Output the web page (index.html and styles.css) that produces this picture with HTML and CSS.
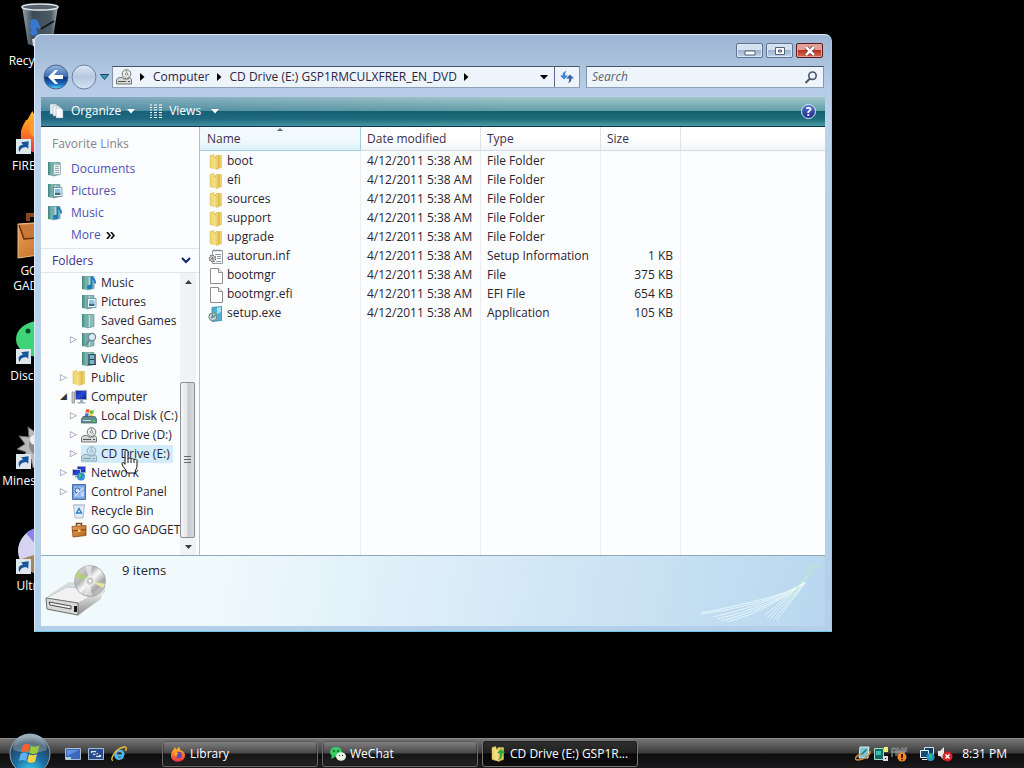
FILE: index.html
```html
<!DOCTYPE html>
<html lang="en">
<head>
    <meta charset="UTF-8">
    <meta name="viewport" content="width=device-width, initial-scale=1.0">
    <title>CD Drive (E:) GSP1RMCULXFRER_EN_DVD</title>
    <link rel="stylesheet" href="styles.css">
</head>
<body>
    <svg class="sprites" aria-hidden="true">
        <defs>
            <linearGradient id="gold" x1="0" x2="1"><stop offset="0" stop-color="#f7e88f"/><stop offset=".5" stop-color="#dcb93c"/><stop offset="1" stop-color="#f4e08a"/></linearGradient>
            <linearGradient id="teal" x1="0" x2="1"><stop offset="0" stop-color="#3f8583"/><stop offset="1" stop-color="#8fc4bd"/></linearGradient>
            <linearGradient id="metal" x1="0" y1="0" x2="0" y2="1"><stop offset="0" stop-color="#f4f4f4"/><stop offset="1" stop-color="#8d8d8d"/></linearGradient>
            <linearGradient id="disc" x1="0" y1="0" x2="1" y2="1"><stop offset="0" stop-color="#e8e8e8"/><stop offset=".35" stop-color="#b4b4b4"/><stop offset=".5" stop-color="#fafafa"/><stop offset=".7" stop-color="#a8a8a8"/><stop offset="1" stop-color="#dedede"/></linearGradient>
            <linearGradient id="screen" x1="0" y1="0" x2="1" y2="1"><stop offset="0" stop-color="#0d1da0"/><stop offset=".5" stop-color="#2a49dc"/><stop offset="1" stop-color="#0b1a86"/></linearGradient>
            <linearGradient id="leather" x1="0" y1="0" x2="1" y2="1"><stop offset="0" stop-color="#eda05a"/><stop offset="1" stop-color="#b4641f"/></linearGradient>
            <linearGradient id="flame" x1="0" y1="0" x2="0" y2="1"><stop offset="0" stop-color="#ffc62b"/><stop offset=".5" stop-color="#ff7a22"/><stop offset="1" stop-color="#f0304a"/></linearGradient>
            <linearGradient id="glass" x1="0" x2="1"><stop offset="0" stop-color="#98a4ae"/><stop offset=".3" stop-color="#3d4a57"/><stop offset=".8" stop-color="#4b5965"/><stop offset="1" stop-color="#a3adb5"/></linearGradient>
            <radialGradient id="orb" cx=".5" cy=".95" r=".9"><stop offset="0" stop-color="#3fd4f4"/><stop offset=".45" stop-color="#1a6fa5"/><stop offset=".8" stop-color="#26425c"/><stop offset="1" stop-color="#7f96a6"/></radialGradient>
        </defs>
        <symbol id="folder" viewBox="0 0 16 16">
            <path d="M2 1.500 6 .5v14l-4-1z" fill="#efd877" stroke="#d3b44c" stroke-width=".5"/>
            <path d="M5 2.500h3.500l1 1v12L5 14z" fill="url(#gold)"/>
            <path d="M8 1.500h5.500v12L8 15.500z" fill="url(#gold)" stroke="#cfae3e" stroke-width=".5"/>
            <path d="M7 4v11" stroke="#fff6bf"/>
        </symbol>
        <symbol id="shell" viewBox="0 0 16 16">
            <path d="M1 1h5v14l-5-1z" fill="url(#teal)"/>
            <path d="M6 1.500h7v12L6 15z" fill="#8dbdb8" stroke="#5a918f" stroke-width=".7"/>
            <path d="M8.500 2v12" stroke="#b9dcd6"/>
        </symbol>
        <symbol id="documents" viewBox="0 0 16 16">
            <use href="#shell"/>
            <path d="M6.500 3.500h7v10h-7z" fill="#eef4f4" stroke="#8aa6a6" stroke-width=".7"/>
            <path d="M8 5.500h4M8 7.500h4M8 9.500h4M8 11.500h4" stroke="#9aa8b0"/>
        </symbol>
        <symbol id="pictures" viewBox="0 0 16 16">
            <use href="#shell"/>
            <path d="M6.500 4.500h8.500v9H6.500z" fill="#f4fafd" stroke="#5d8b98" stroke-width=".8"/>
            <path d="M8 6h5.500v3H8z" fill="#8dc4e6"/><path d="M8 9.500h5.500v2.500H8z" fill="#33708d"/>
        </symbol>
        <symbol id="music" viewBox="0 0 16 16">
            <use href="#shell"/>
            <path d="M10.500 11.500V1.500c1 2.500 4.500 2.500 3.500 7" fill="none" stroke="#1c7ac0" stroke-width="1.700"/>
            <ellipse cx="8.700" cy="12" rx="2.700" ry="2.200" fill="#1c7ac0"/>
        </symbol>
        <symbol id="searches" viewBox="0 0 16 16">
            <use href="#shell"/>
            <circle cx="11" cy="5" r="3.600" fill="#dcecf5" stroke="#6c8798" stroke-width="1.200"/>
            <path d="M8.500 8 5 13" stroke="#6c8798" stroke-width="2"/>
        </symbol>
        <symbol id="videos" viewBox="0 0 16 16">
            <use href="#shell"/>
            <path d="M7 3h8v11H7z" fill="#27424e"/><path d="M9 4h4v4H9zM9 9h4v4H9z" fill="#78b7d5"/>
            <path d="M8 3.500v10M14 3.500v10" stroke="#cfdde2" stroke-dasharray="1 1"/>
        </symbol>
        <symbol id="computer" viewBox="0 0 16 16">
            <path d="M1 3h2.500v11H1z" fill="#c9c9c0" stroke="#777" stroke-width=".6"/>
            <path d="M4.500 1.500h11v9h-11z" fill="url(#screen)" stroke="#9aa3b5"/>
            <path d="M9 11h3v2h2.500v1.500h-8V13H9z" fill="#a6acb8"/>
        </symbol>
        <symbol id="disk" viewBox="0 0 16 16">
            <path d="M5 1.500c2-1 3-.5 3.500 0L8 5c-1-.6-2-.6-3.500 0z" fill="#e95f2b"/>
            <path d="M9 2c1 .8 2.500.8 4 0L12.300 5.500c-1.500.7-3 .5-3.900-.2z" fill="#76b82a"/>
            <path d="M4.300 5.700c1.500-.6 2.500-.5 3.500.1L7 9H3.500z" fill="#3079c9"/>
            <path d="M8.300 6c1.500.8 2.500.6 3.800.1L11.500 9H7.700z" fill="#f6c32c"/>
            <path d="M2 8.500h12l1.500 2.500v4H.5v-4z" fill="#5f8d92" stroke="#35595f" stroke-width=".7"/>
            <path d="M2 12.500h8" stroke="#bfe0e0"/><path d="M12 12h2v2h-2z" fill="#4bd845"/>
        </symbol>
        <symbol id="cd" viewBox="0 0 16 16">
            <circle cx="10.500" cy="5" r="4.300" fill="#e9ecea" stroke="#727672"/>
            <path d="M10.500 5V1M10.500 5l3 2.500" stroke="#a3a8a3"/>
            <circle cx="10.500" cy="5" r="1.200" fill="#fff" stroke="#777" stroke-width=".8"/>
            <path d="M3 8.500h3l2 1.500h4l2-1.500 1.500 2v4.500H.5v-4.500z" fill="#d5d8d5" stroke="#747874"/>
            <path d="M2 12.500h8M12 12.500h2" stroke="#555"/>
        </symbol>
        <symbol id="network" viewBox="0 0 16 16">
            <path d="M6.500 1.500h8v6h-8z" fill="url(#screen)" stroke="#9aa3b5"/>
            <path d="M1.500 4.500h8v6h-8z" fill="url(#screen)" stroke="#c0c8d8"/>
            <path d="M4 11h3v1.500H4z" fill="#9aa3b5"/>
            <circle cx="10" cy="11.500" r="4" fill="#2f8ed8"/>
            <path d="M8 8.500c2 0 3 1 2 2.500s-1 2-2.500 1.500zM11.500 12l2-1.500-.5 3z" fill="#55c255"/>
        </symbol>
        <symbol id="panel" viewBox="0 0 16 16">
            <path d="M1.500.5h13v15h-13z" fill="#6f98dd" stroke="#5070a8"/>
            <path d="M3 2.500h10v11H3z" fill="#9bbdf0"/>
            <circle cx="6.500" cy="6.500" r="2.500" fill="#d9e8fb" stroke="#3b5fae"/>
            <path d="m4 12 8-8M10 9h3M10 11h3" stroke="#eef5ff"/>
        </symbol>
        <symbol id="bin" viewBox="0 0 16 16">
            <path d="M2.500 2h11L12 15H4z" fill="#e1ecf5" stroke="#9aaebf" stroke-width=".8"/>
            <path d="M2 2h12" stroke="#b3c4d2"/>
            <path d="M8 5.500 10.500 10H5.500z" fill="none" stroke="#2d7ed0" stroke-width="1.400"/>
        </symbol>
        <symbol id="case" viewBox="0 0 16 16">
            <path d="M5.500 4V1.500h5V4" fill="none" stroke="#7a4412" stroke-width="1.500"/>
            <path d="M1 4.500 15 3.500v10L2 15z" fill="url(#leather)" stroke="#8a4a10" stroke-width=".8"/>
            <path d="M1.500 9 15 7.500" stroke="#7c400c"/><path d="M7 7.500h2.500V10H7z" fill="#ffdb6e"/>
        </symbol>
        <symbol id="inf" viewBox="0 0 16 16">
            <path d="M4.500 1.500h10v13h-10z" fill="#fff" stroke="#919ba6"/>
            <path d="M6 .5v2M8 .5v2M10 .5v2M12 .5v2" stroke="#788390"/>
            <path d="M7 5.500h6M9 7.500h4M9 9.500h4M8 12.500h5" stroke="#8d9db0"/>
            <circle cx="4.500" cy="9.500" r="3" fill="#e9e9e9" stroke="#656565" stroke-width="1.500" stroke-dasharray="1.500 .8"/>
            <circle cx="4.500" cy="9.500" r="1.200" fill="#666"/>
        </symbol>
        <symbol id="file" viewBox="0 0 16 16">
            <path d="M2.500.5h8l4 4v11h-12z" fill="#fff" stroke="#8f8f8f"/><path d="M10.500.5v4h4" fill="#eee" stroke="#8f8f8f"/>
        </symbol>
        <symbol id="setup" viewBox="0 0 16 16">
            <path d="M4 1.500 13.500.5v14L4 15.500z" fill="#4fb0d0" stroke="#2c7d9f" stroke-width=".7"/>
            <path d="M9 1.500 13 1v5L9 8z" fill="#a5e3ee"/>
            <circle cx="4.800" cy="10.800" r="4" fill="#c5d2d5" stroke="#6c8488"/><path d="m4 8 1 3 3-2M3 12l2-1" fill="none" stroke="#4f8a72" stroke-width="1.300"/>
        </symbol>
        <symbol id="firefox" viewBox="0 0 48 48">
            <path d="M10 12 15 3l4 8 8-9 5 11c10 4 14 10 13 18-2 10-11 16-22 16C11 47 2 39 3 27c0-6 3-10 5-14z" fill="url(#flame)"/>
            <circle cx="26" cy="27" r="10" fill="#6a44b8"/>
            <path d="M14 16c8 0 7 6 13 6-5 2-8 5-6 11-8-3-11-9-7-17z" fill="#ffa12e"/>
        </symbol>
        <symbol id="shortcut" viewBox="0 0 16 16">
            <path d="M0 0h16v16H0z" fill="#dfe6ec"/><path d="M4 14C1.500 10 3 6.500 7.500 6L5.500 3.500 13.500 2.500 13 10.500l-2.200-2C7 9 4.500 10 4 14z" fill="#17549c"/>
        </symbol>
        <symbol id="winflag" viewBox="0 0 24 24">
            <path d="M5 4c3-2 5-1.500 7 0l-2 7.500c-2.500-1.500-4.500-1.500-7 0z" fill="#f0632d"/>
            <path d="M13 4.500c3 1.800 5 1.500 8.500-.3L19.500 12c-3 1.500-5.500 1.500-8 0z" fill="#9bc83c"/>
            <path d="M2.700 12.700c2.500-1.500 4.500-1.500 7 0L7.800 20c-2.300-1.500-4.500-1.300-7 0z" fill="#5eb1ec"/>
            <path d="M11 13.200c2.500 1.500 5 1.500 8 0L17 20.700c-3 1.500-5 1.300-7.800-.2z" fill="#fbd044"/>
        </symbol>
    </svg>

    <main class="desktop">
        <ul class="shortcuts">
            <li>
                <svg viewBox="0 0 48 48"><path d="m6 5 36 0-6 39-12 3-12-4z" fill="url(#glass)"/><path d="m16 38 17-3-2 9-9 3-5-2z" fill="#dcdcdc"/><ellipse cx="24" cy="6" rx="18" ry="3" fill="#56616b" stroke="#dfe6ea" stroke-width="1.500"/><path d="M14 19c4-2 8-1 9 4l2 5-5-1 2 6-5 2-4-4 3-2-3-4 2-2z" fill="#3677cf"/><path d="m38 20-13 8" stroke="#12181e" stroke-width="2"/></svg>
                <span>Recycle Bin</span>
            </li>
            <li>
                <svg viewBox="0 0 48 48"><use href="#firefox" y="2" width="50" height="46"/><use href="#shortcut" y="33" width="15" height="15"/></svg>
                <span>FIREFOX 9</span>
            </li>
            <li>
                <svg viewBox="0 0 48 48"><path d="M12 10V4h20v6" fill="none" stroke="#8a461c" stroke-width="4"/><path d="m2 13 44-3-3 31-41 6z" fill="url(#leather)" stroke="#f1bd83"/><path d="m3 14 5 14 36-3 2-14" fill="#c8793a" stroke="#683007" stroke-width="1.500"/></svg>
                <span>GO GO GADGETS</span>
            </li>
            <li>
                <svg viewBox="0 0 48 48"><ellipse cx="24" cy="23" rx="24" ry="18" fill="#3fd477"/><circle cx="12" cy="15" r="2.500" fill="#0d4b2b"/><circle cx="34" cy="15" r="2.500" fill="#0d4b2b"/><use href="#shortcut" y="33" width="15" height="15"/></svg>
                <span>Discord 64</span>
            </li>
            <li>
                <svg viewBox="0 0 48 48"><path d="m24 2 3 9 8-5-1 9 10-1-6 8 8 4-8 5 4 9-9-2-1 9-8-6-7 6-2-9-9 1 4-8-9-3 8-5-6-8 10 1-1-10 7 5z" fill="#b9b9b9" stroke="#666"/><circle cx="24" cy="24" r="11" fill="#888"/><circle cx="19" cy="19" r="5" fill="#f2f2f2"/><use href="#shortcut" y="33" width="15" height="15"/></svg>
                <span>Minesweeper</span>
            </li>
            <li>
                <svg viewBox="0 0 48 48"><circle cx="25" cy="25" r="23" fill="#d6d3f2"/><path d="M25 25 10 7A23 23 0 0 1 28 2z" fill="#8b83ec"/><circle cx="25" cy="25" r="6" fill="#333"/><path d="m2 34 26-8v20H2z" fill="#a9835a"/><use href="#shortcut" y="33" width="15" height="15"/></svg>
                <span>UltraISO</span>
            </li>
        </ul>

        <section class="window">
            <header class="titlebar">
                <button class="caption minimize" aria-label="Minimize"><svg width="12" height="6" viewBox="0 0 12 6"><path d="M1 1h10v4H1z" fill="#fff" stroke="#56617a"/></svg></button>
                <button class="caption" aria-label="Maximize"><svg width="12" height="10" viewBox="0 0 12 10"><path d="M1.500 1.500h9v7h-9z" fill="#fff" stroke="#56617a"/><path d="M4.500 4h3v2h-3z" fill="#b5c8df" stroke="#56617a"/></svg></button>
                <button class="caption close" aria-label="Close"><svg width="12" height="10" viewBox="0 0 12 10"><path d="m2 1 8 8M10 1 2 9" stroke="#6b3030" stroke-width="4"/><path d="m2 1 8 8M10 1 2 9" stroke="#fff" stroke-width="2.500"/></svg></button>
            </header>

            <div class="navbar">
                <div class="travel">
                    <button aria-label="Back">
                        <svg width="26" height="26" viewBox="0 0 26 26"><defs><linearGradient id="back" x1="0" y1="0" x2="0" y2="1"><stop offset="0" stop-color="#98b8e2"/><stop offset=".48" stop-color="#3a6bb4"/><stop offset=".5" stop-color="#0c2d78"/><stop offset=".8" stop-color="#1b6cc2"/><stop offset="1" stop-color="#5ee0fb"/></linearGradient></defs><circle cx="13" cy="13" r="12" fill="url(#back)" stroke="#4b6184"/><path d="m5 13 7-7h3l-4 5h9v4h-9l4 5h-3z" fill="#fff"/></svg>
                    </button>
                    <button aria-label="Forward">
                        <svg width="26" height="26" viewBox="0 0 26 26"><defs><linearGradient id="fwd" x1="0" y1="0" x2="0" y2="1"><stop offset="0" stop-color="#dce8f5"/><stop offset=".5" stop-color="#b4c8df"/><stop offset="1" stop-color="#d3e4f4"/></linearGradient></defs><circle cx="13" cy="13" r="12" fill="url(#fwd)" stroke="#6a7f9d"/></svg>
                    </button>
                    <button class="history" aria-label="Recent pages"><svg width="9" height="6" viewBox="0 0 9 6"><path d="M.5.5h8l-4 5z" fill="#3aa0c2" stroke="#1f3f68"/></svg></button>
                </div>
                <nav class="address" aria-label="Address">
                    <svg class="drive" width="18" height="16"><use href="#cd"/></svg>
                    <svg class="arrow" width="5" height="8"><path d="M0 0l4.500 4L0 8z"/></svg>
                    <a href="#">Computer</a>
                    <svg class="arrow" width="5" height="8"><path d="M0 0l4.500 4L0 8z"/></svg>
                    <a href="#">CD Drive (E:) GSP1RMCULXFRER_EN_DVD</a>
                    <svg class="arrow" width="5" height="8"><path d="M0 0l4.500 4L0 8z"/></svg>
                    <button class="previous" aria-label="Previous locations"><svg width="8" height="5"><path d="M0 0h8L4 4.500z"/></svg></button>
                    <button class="refresh" aria-label="Refresh"><svg width="14" height="14" viewBox="0 0 14 14"><path d="M4 9.500 0 5.500h2.500C2.500 3 4 1.500 6.500 1 5 2.500 5 4 5.300 5.500H8z" fill="#3b83d0"/><path d="m10 4.500 4 4h-2.500c0 2.500-1 4-3.500 4.500 1.300-1.500 1.300-3 .9-4.500H6z" fill="#3764ac"/></svg></button>
                </nav>
                <label class="search">
                    <input type="text" placeholder="Search" aria-label="Search">
                    <svg width="14" height="13" viewBox="0 0 14 13"><circle cx="8.500" cy="4.700" r="3.700" fill="none" stroke="#4c5468" stroke-width="1.600"/><path d="M6 7.500 1.500 12" stroke="#4c5468" stroke-width="2"/></svg>
                </label>
            </div>

            <div class="toolbar">
                <button>
                    <svg width="16" height="16" viewBox="0 0 16 16" stroke="#7693a4" stroke-width=".5"><path d="M1 1h6l2 2v8H1z" fill="#e9f1f5"/><path d="M4 3h6l2 2v8H4z" fill="#f4f8fa"/><path d="M7 5h5l2 2v8H7z" fill="#fff"/></svg>
                    Organize
                    <svg class="drop" width="8" height="5"><path d="M0 0h8L4 4.500z"/></svg>
                </button>
                <button>
                    <svg width="14" height="14" viewBox="0 0 14 14"><path d="M1 1h2M1 3.500h2M1 6h2M1 8.500h2M1 11h2M1 13.500h2M5 1h3M5 3.500h3M5 6h3M5 8.500h3M5 11h3M5 13.500h3M10 1h3M10 3.500h3M10 6h3M10 8.500h3M10 11h3M10 13.500h3" stroke="#fff"/></svg>
                    Views
                    <svg class="drop wide" width="8" height="5"><path d="M0 0h8L4 4.500z"/></svg>
                </button>
                <button class="help" aria-label="Help">?</button>
            </div>

            <div class="content">
                <aside class="sidebar">
                    <div class="favorites">
                        <h2>Favorite Links</h2>
                        <a href="#"><svg><use href="#documents"/></svg>Documents</a>
                        <a href="#"><svg><use href="#pictures"/></svg>Pictures</a>
                        <a href="#"><svg><use href="#music"/></svg>Music</a>
                        <a href="#" class="more">More <svg viewBox="0 0 9 7"><path d="m1 0 3 3.500L1 7M5 0l3 3.500L5 7" fill="none" stroke="#000" stroke-width="1.600"/></svg></a>
                    </div>
                    <button class="folders">Folders <svg width="10" height="7" viewBox="0 0 10 7"><path d="m1 1 4 4 4-4" fill="none" stroke="#10226e" stroke-width="2"/></svg></button>
                    <div class="treebox">
                        <ul class="tree">
                            <li class="deep"><svg><use href="#music"/></svg><span>Music</span></li>
                            <li class="deep"><svg><use href="#pictures"/></svg><span>Pictures</span></li>
                            <li class="deep"><svg><use href="#shell"/></svg><span>Saved Games</span></li>
                            <li class="deep closed"><svg><use href="#searches"/></svg><span>Searches</span></li>
                            <li class="deep"><svg><use href="#videos"/></svg><span>Videos</span></li>
                            <li class="closed"><svg><use href="#folder"/></svg><span>Public</span></li>
                            <li class="open"><svg><use href="#computer"/></svg><span>Computer</span></li>
                            <li class="deep closed"><svg><use href="#disk"/></svg><span>Local Disk (C:)</span></li>
                            <li class="deep closed"><svg><use href="#cd"/></svg><span>CD Drive (D:)</span></li>
                            <li class="deep closed selected"><svg><use href="#cd"/></svg><span>CD Drive (E:)</span></li>
                            <li class="closed"><svg><use href="#network"/></svg><span>Network</span></li>
                            <li class="closed"><svg><use href="#panel"/></svg><span>Control Panel</span></li>
                            <li><svg><use href="#bin"/></svg><span>Recycle Bin</span></li>
                            <li><svg><use href="#case"/></svg><span>GO GO GADGET</span></li>
                        </ul>
                        <div class="scrollbar">
                            <button aria-label="Scroll up"><svg width="7" height="4"><path d="M0 4h7L3.500 0z"/></svg></button>
                            <div class="track"><div class="thumb"></div></div>
                            <button aria-label="Scroll down"><svg width="7" height="4"><path d="M0 0h7L3.500 4z"/></svg></button>
                        </div>
                    </div>
                </aside>

                <div class="listing">
                    <table>
                        <colgroup><col class="name"><col class="date"><col class="type"><col class="size"><col></colgroup>
                        <thead>
                            <tr><th class="sorted">Name</th><th>Date modified</th><th>Type</th><th>Size</th><th></th></tr>
                        </thead>
                        <tbody>
                            <tr><td><svg><use href="#folder"/></svg>boot</td><td>4/12/2011 5:38 AM</td><td>File Folder</td><td></td><td></td></tr>
                            <tr><td><svg><use href="#folder"/></svg>efi</td><td>4/12/2011 5:38 AM</td><td>File Folder</td><td></td><td></td></tr>
                            <tr><td><svg><use href="#folder"/></svg>sources</td><td>4/12/2011 5:38 AM</td><td>File Folder</td><td></td><td></td></tr>
                            <tr><td><svg><use href="#folder"/></svg>support</td><td>4/12/2011 5:38 AM</td><td>File Folder</td><td></td><td></td></tr>
                            <tr><td><svg><use href="#folder"/></svg>upgrade</td><td>4/12/2011 5:38 AM</td><td>File Folder</td><td></td><td></td></tr>
                            <tr><td><svg><use href="#inf"/></svg>autorun.inf</td><td>4/12/2011 5:38 AM</td><td>Setup Information</td><td>1 KB</td><td></td></tr>
                            <tr><td><svg><use href="#file"/></svg>bootmgr</td><td>4/12/2011 5:38 AM</td><td>File</td><td>375 KB</td><td></td></tr>
                            <tr><td><svg><use href="#file"/></svg>bootmgr.efi</td><td>4/12/2011 5:38 AM</td><td>EFI File</td><td>654 KB</td><td></td></tr>
                            <tr><td><svg><use href="#setup"/></svg>setup.exe</td><td>4/12/2011 5:38 AM</td><td>Application</td><td>105 KB</td><td></td></tr>
                            <tr class="rest"><td></td><td></td><td></td><td></td><td></td></tr>
                        </tbody>
                    </table>
                </div>
            </div>

            <footer class="details">
                <svg width="64" height="56" viewBox="0 0 64 56">
                    <path d="M4 33 24 20l36 2v8L34 54 2 48z" fill="#9a9a9a" opacity=".3"/>
                    <path d="M1 36 22 25l36 3-25 13z" fill="#f1f1f1" stroke="#bdbdbd" stroke-width=".7"/>
                    <path d="m33 41 25-13-2 9-23 16z" fill="url(#metal)"/>
                    <path d="m1 36 32 5v12L2 47z" fill="#d8dad8" stroke="#6f7370"/>
                    <path d="m4 40 22 4v3L5 43z" fill="#f2f2f2" stroke="#4a4a4a"/>
                    <path d="M29 44h3v6h-3z" fill="#161616"/>
                    <circle cx="45" cy="19" r="15.500" fill="url(#disc)" stroke="#999" stroke-width=".7"/>
                    <path d="M45 19 30 15a16 16 0 0 1 3-6z" fill="#a8dc58" opacity=".7"/>
                    <path d="m45 19 15 3-2 4z" fill="#e8e59b"/>
                    <path d="m45 19-5-15 7-.5zM45 19l2 15-8-1z" fill="#fff" opacity=".5"/>
                    <circle cx="45" cy="19" r="4.500" fill="#d3d3d3" stroke="#f7f7f7"/><circle cx="45" cy="19" r="2" fill="#fff" stroke="#a0a0a0" stroke-width=".6"/>
                </svg>
                <p>9 items</p>
                <svg class="streaks" width="124" height="62" viewBox="0 0 124 62" fill="none" stroke="#eefaff">
                    <path d="M2 52Q65 43 100 24M14 55Q65 44 102 23M18 57Q68 46 104 22M22 59Q70 47 105 21M28 60Q72 48 106 20M2 51Q60 40 96 27" opacity=".8"/>
                    <path d="M68 56 104 20M71 57 105 21M75 57 106 21M78 58 107 20M66 53 103 22" opacity=".8"/>
                    <path d="M90 36 100 24M102 21l8-9" stroke="#c3efd2" stroke-width="2" opacity=".7"/>
                    <path d="M110 10V4l10-1-5 3-3 6" stroke="#b5ecc5"/>
                </svg>
            </footer>
        </section>

        <svg class="pointer" width="18" height="25" viewBox="0 0 18 25"><path d="M4 1.500c0-1.300 3-1.300 3 0V9c0-1.300 2.800-1.300 3 .3 0-1 2.800-1 3 .5 0-1 3-.7 3 .8V16c0 2.500-2 4-2 7H6c0-3-4.500-6-5-9-.3-1.800 2-2 3 .3z" fill="#fff" stroke="#111"/><path d="M7 9v4M10 9.500V13M13 10v3" stroke="#111"/></svg>
    </main>

    <footer class="taskbar">
        <button class="start" aria-label="Start"><svg width="42" height="42" viewBox="0 0 42 42"><circle cx="21" cy="21" r="20" fill="url(#orb)" stroke="#8da3b0"/><path d="M4 17a17 16 0 0 1 34 0Q21 23 4 17z" fill="#fff" opacity=".25"/><use href="#winflag" x="9" y="8" width="24" height="24"/></svg></button>
        <div class="quick">
            <button aria-label="Show desktop"><svg viewBox="0 0 16 16"><path d="M.5 2.500h15v11H.5z" fill="#3b67c0" stroke="#a9bcd6"/><path d="M2 4h12L2 10z" fill="#658fda"/><path d="M1 11h5v3H1z" fill="#a9cfdc"/></svg></button>
            <button aria-label="Switch between windows"><svg viewBox="0 0 16 16"><path d="M.5 2.500h15v11H.5z" fill="#254a91" stroke="#a9bcd6"/><path d="M2.500 4.500h6v3h-6zM4.500 6.500h6v3h-6zM7.500 8.500h6v3h-6z" fill="#d5e5f8" stroke="#19376f" stroke-width=".7"/></svg></button>
            <button aria-label="Internet Explorer"><svg viewBox="0 0 16 16"><path d="M13 9.500H4.500c.3 3.500 5 4.300 7.500 1.500M4.500 8.500c.2-5 7.500-5 8 .5" fill="none" stroke="#4fb6ee" stroke-width="2.600"/><path d="M2 14.500C-2 14 5 2 13 1c3-.3 2.500 2 1.500 4" fill="none" stroke="#e8bd36" stroke-width="1.400"/></svg></button>
        </div>
        <div class="tasks">
            <button><svg viewBox="0 0 48 48"><use href="#firefox"/></svg>Library</button>
            <button><svg viewBox="0 0 16 16"><ellipse cx="6" cy="6" rx="6" ry="5" fill="#32cf66"/><path d="m2 9-1 4 4-2z" fill="#32cf66"/><ellipse cx="11" cy="10.500" rx="5" ry="4.200" fill="#e9f3e6"/><circle cx="4" cy="5" r=".8"/><circle cx="8" cy="5" r=".8"/><circle cx="9.500" cy="9.500" r=".6"/><circle cx="12.500" cy="9.500" r=".6"/></svg>WeChat</button>
            <button class="current"><svg viewBox="0 0 16 16"><use href="#folder"/><path d="m11 3 4 4h-2.500c0 4-1 6-4.500 7 2-2 2-4 1.500-7H7z" fill="#2fa83a"/></svg>CD Drive (E:) GSP1R...</button>
        </div>
        <div class="tray">
            <svg viewBox="0 0 16 16"><path d="M5 1h9l-1 11H4z" fill="#7fc4cf" stroke="#d7f1f4"/><path d="m6 8 5-5 1 1-5 5z" fill="#277"/><path d="M15 5c1 4-6 9-12 9s0-6 3-6" fill="none" stroke="#d68a3d" stroke-width="1.500"/></svg>
            <svg viewBox="0 0 16 16"><path d="M1.500 2.500h9v11h-9z" fill="#146b66" stroke="#9ed8cf"/><path d="M3 5h5v4H3z" fill="#35c2b0"/><path d="M11 1h4v5h-4z" fill="#f0ef72"/><path d="M10 10h5v5h-5z" fill="#ddd"/><path d="M12 12h1v1h-1z"/></svg>
            <svg viewBox="0 0 16 16"><path d="M1 2v9M3 1v3M5 2v8M7 1v9M9 3v6M11 1v9M13 2v8M15 1v5M1 6h13" stroke="#a4aab0"/><circle cx="11" cy="11" r="4.500" fill="#ef8a28"/><path d="M11 8v4M11 13v1.200" stroke="#5c1608" stroke-width="2"/></svg>
            <svg class="net" viewBox="0 0 16 16"><path d="M5.500 1.500h9v8h-9z" fill="#123d5e" stroke="#cde4f2"/><path d="M1.500 4.500h8v7h-8z" fill="#174c70" stroke="#e4f3fb"/><path d="M3 13.500h5" stroke="#dceaf2"/><circle cx="11.500" cy="11" r="4" fill="#2394c6"/><path d="m10 8 3 1-1 4-2-2z" fill="#43b957"/></svg>
            <svg viewBox="0 0 16 16"><path d="M1 5h2l4-4v13l-4-4H1z" fill="#e9e9e9"/><circle cx="10.500" cy="10.500" r="5" fill="#d81f2a"/><path d="m8.500 8.500 4 4m0-4-4 4" stroke="#fff" stroke-width="1.600"/></svg>
            <time>8:31 PM</time>
        </div>
    </footer>
</body>
</html>
```

FILE: styles.css
```css
* {
    box-sizing: border-box;
}
body {
    margin: 0;
    height: 100vh;
    display: flex;
    flex-direction: column;
    overflow: hidden;
    background: #000;
    color: #2a2430;
    font-family: "Open Sans", "Noto Sans", sans-serif;
    font-size: 12px;
    line-height: 18px;
}
button {
    border: none;
    background: none;
    padding: 0;
    color: inherit;
    font: inherit;
}
a {
    color: inherit;
    text-decoration: none;
}
ul {
    list-style: none;
    margin: 0;
    padding: 0;
}
svg {
    flex: none;
}
.sprites {
    position: absolute;
    width: 0;
    height: 0;
}

/* desktop */
.desktop {
    position: relative;
    flex: 1;
    min-height: 0;
}
.shortcuts {
    width: 80px;
}
.shortcuts li {
    height: 105px;
    display: flex;
    flex-direction: column;
    align-items: center;
    color: #fff;
    text-align: center;
    line-height: 15px;
}
.shortcuts svg {
    width: 48px;
    height: 50px;
    margin-bottom: 3px;
}

/* explorer window */
.window {
    position: absolute;
    top: 34px;
    right: 192px;
    bottom: 106px;
    left: 34px;
    display: flex;
    flex-direction: column;
    padding: 0 6px 5px;
    border: 1px solid #d4eafa;
    border-right-color: #8ed3ee;
    border-bottom-color: #6fc6e6;
    border-radius: 7px 7px 0 0;
    background: linear-gradient(#9db5d2, #b6cce6 50px, #bcd3ea 90px, #b4cfe9);
}
.titlebar {
    height: 26px;
    display: flex;
    justify-content: flex-end;
    gap: 3px;
    padding: 8px 2px 0;
}
.caption {
    display: flex;
    align-items: center;
    justify-content: center;
    width: 27px;
    height: 15px;
    border: 1px solid #5d7392;
    border-radius: 2px;
    background: linear-gradient(#d4e1ef 45%, #9eb5d0 50%, #c1d5e8);
    box-shadow: inset 0 0 0 1px #d9e6f3;
}
.minimize {
    align-items: flex-end;
    padding-bottom: 1px;
}
.close {
    border-color: #591b20;
    background: linear-gradient(#e3a096 45%, #b93424 50%, #d76a4c);
    box-shadow: inset 0 0 0 1px #e4a094;
}
.navbar {
    height: 36px;
    display: flex;
    align-items: center;
    gap: 3px;
    padding: 0 1px 4px 2px;
}
.navbar > * {
    height: 22px;
}
.travel {
    display: flex;
    align-items: center;
    gap: 2px;
}
.travel button {
    display: flex;
}
.history {
    padding-left: 1px;
}
.address {
    flex: 1;
    display: flex;
    align-items: center;
    padding-left: 2px;
    border: 1px solid #5b6e88;
    border-color: #45566e #8496ac #8ea1b6;
    background: #edf4fc;
    color: #2b2540;
}
.address .arrow {
    margin: 0 8px 0 7px;
}
.address .previous {
    display: flex;
    justify-content: center;
    width: 20px;
    margin-left: auto;
}
.address .refresh {
    display: flex;
    align-items: center;
    justify-content: center;
    width: 25px;
    height: 20px;
    border-left: 1px solid #5b6e88;
}
.search {
    width: 238px;
    display: flex;
    align-items: center;
    margin-left: 3px;
    padding: 0 5px;
    border: 1px solid #5b6e88;
    border-color: #45566e #8496ac #8ea1b6;
    background: #eef4fb;
}
.search input {
    flex: 1;
    min-width: 0;
    padding: 0;
    border: none;
    outline: none;
    background: none;
    font: inherit;
    font-style: italic;
}
.search input::placeholder {
    color: #5d6370;
}
.toolbar {
    height: 30px;
    flex: none;
    display: flex;
    align-items: center;
    padding: 0 9px 1px 8px;
    border-bottom: 1px solid #0b3648;
    background:
        linear-gradient(90deg, rgba(40, 90, 150, 0.3), transparent 60%),
        linear-gradient(#a3c6cb, #5f9fa6 48%, #12626e 50%, #1c6d79 75%, #4b9aa3);
    color: #fff;
}
.toolbar button {
    display: flex;
    align-items: center;
    gap: 6px;
    margin-right: 14px;
}
.drop {
    fill: #fff;
}
.wide {
    margin-left: 4px;
}
.toolbar .help {
    justify-content: center;
    width: 15px;
    height: 15px;
    margin: 0 0 0 auto;
    border: 1px solid #e0e8fa;
    border-radius: 50%;
    background: linear-gradient(#5474cc, #16298f);
    font-weight: bold;
    line-height: 13px;
}
.content {
    flex: 1;
    min-height: 0;
    display: grid;
    grid-template-columns: 159px 1fr;
    background: #fcfdfe;
}

/* left pane */
.sidebar {
    display: flex;
    flex-direction: column;
    min-height: 0;
    border-right: 1px solid #a9c2d4;
}
.favorites {
    padding: 6px 6px 2px;
    color: #4a52b4;
}
.favorites h2 {
    margin: 0 0 3px 5px;
    color: #85858c;
    font-size: 12px;
    font-weight: normal;
    line-height: 22px;
}
.favorites a {
    display: flex;
    align-items: center;
    gap: 8px;
    height: 22px;
}
.favorites svg {
    width: 16px;
    height: 16px;
}
.favorites .more {
    gap: 5px;
    padding-left: 24px;
}
.favorites .more svg {
    width: 9px;
    height: 7px;
}
.folders {
    display: flex;
    align-items: center;
    justify-content: space-between;
    height: 25px;
    flex: none;
    padding: 0 8px 0 11px;
    border-top: 1px solid #dfe6ec;
    border-bottom: 1px solid #dfe6ec;
    color: #43308f;
}
.treebox {
    flex: 1;
    min-height: 0;
    display: flex;
}
.tree {
    flex: 1;
    min-width: 0;
    overflow: hidden;
}
.tree li {
    display: flex;
    align-items: center;
    gap: 4px;
    height: 19px;
    padding-left: 19px;
    white-space: nowrap;
}
.tree .deep {
    padding-left: 29px;
}
.tree li::before {
    content: "";
    width: 7px;
    flex: none;
    color: #777;
    font-family: "DejaVu Sans", sans-serif;
    font-size: 9px;
    line-height: 9px;
}
.tree .closed::before {
    content: "▷";
}
.tree .open::before {
    content: "◢";
    color: #333;
}
.tree svg {
    width: 16px;
    height: 16px;
}
.selected span {
    margin-left: -20px;
    padding: 0 3px 0 20px;
    background: rgba(170, 220, 245, 0.5);
}
.scrollbar {
    width: 16px;
    display: flex;
    flex-direction: column;
    margin-right: 3px;
    background: #f1f2f3;
}
.scrollbar button {
    height: 17px;
    display: flex;
    align-items: center;
    justify-content: center;
    fill: #3c3c3c;
}
.track {
    flex: 1;
    display: flex;
    align-items: flex-end;
}
.thumb {
    width: 15px;
    height: 63%;
    border: 1px solid #8d9196;
    border-radius: 2px;
    background:
        repeating-linear-gradient(#666a70 0 1px, transparent 1px 3px) center / 7px 8px no-repeat,
        linear-gradient(90deg, #f6f6f7, #e6e7e9 45%, #c6c9cd 55%, #d8dadd);
}

/* file list */
.listing table {
    width: 100%;
    height: 100%;
    table-layout: fixed;
    border-collapse: separate;
    border-spacing: 0;
}
.name {
    width: 161px;
}
.date,
.type {
    width: 120px;
}
.size {
    width: 80px;
}
.listing th {
    height: 24px;
    padding: 0 6px;
    border-right: 1px solid #dde3e8;
    border-bottom: 1px solid #d3dbe2;
    background: linear-gradient(#fff 50%, #f2f4f7);
    color: #3a2f50;
    font-weight: normal;
    text-align: left;
}
.listing .sorted {
    position: relative;
    padding-left: 7px;
    border-color: #9fd0e4;
    background: linear-gradient(#f3fafd 50%, #dceff9);
}
.sorted::after {
    content: "";
    position: absolute;
    top: 1px;
    left: 48%;
    border: 3px solid transparent;
    border-top: none;
    border-bottom-color: #5f6f78;
}
.listing td {
    height: 19px;
    padding: 0 6px;
    border-right: 1px solid #eceff2;
    line-height: 19px;
    white-space: nowrap;
}
.listing td:last-child,
.listing th:last-child {
    border-right: none;
}
.listing td:first-child {
    padding-left: 8px;
}
.listing td:nth-child(4) {
    padding-right: 7px;
    text-align: right;
}
.listing td svg {
    width: 16px;
    height: 16px;
    margin-right: 3px;
    vertical-align: middle;
}
.listing .rest td {
    height: auto;
}

/* details pane */
.details {
    height: 71px;
    flex: none;
    display: flex;
    align-items: flex-start;
    padding: 6px 2px 0 4px;
    border-top: 1px solid #8ea9bb;
    background: linear-gradient(100deg, #f0fafd 20%, #d8ebf7 55%, #b8d7ee);
}
.details p {
    margin: 0 0 0 13px;
    line-height: 16px;
    font-size: 13px;
}
.streaks {
    margin-left: auto;
}
.pointer {
    position: absolute;
    top: 450px;
    left: 121px;
}

/* taskbar */
.taskbar {
    height: 30px;
    flex: none;
    display: flex;
    align-items: center;
    padding: 0 17px 0 9px;
    border-top: 1px solid #8b8b8b;
    background: linear-gradient(#747474, #3b3b3b 48%, #0c0c0c 52%, #1b1b1d);
    color: #fff;
    z-index: 1;
}
.start {
    height: 42px;
    width: 42px;
    flex: none;
}
.quick {
    display: flex;
    gap: 7px;
    margin: 0 35px 0 14px;
}
.quick button {
    display: flex;
}
.quick svg,
.tasks svg,
.tray svg {
    width: 16px;
    height: 16px;
}
.tasks {
    flex: 1;
    display: flex;
    gap: 4px;
}
.tasks button {
    display: flex;
    align-items: center;
    gap: 4px;
    width: 156px;
    height: 27px;
    padding: 0 7px;
    border: 1px solid #6c6c6c;
    border-radius: 3px;
    background: linear-gradient(#858585, #484848 48%, #151515 52%, #222);
    box-shadow: inset 0 0 0 1px rgba(0, 0, 0, 0.3);
    white-space: nowrap;
}
.tasks .current {
    border-color: #777;
    background: linear-gradient(#2f2f2f, #202020 48%, #060606 52%, #111);
}
.tray {
    display: flex;
    align-items: center;
    gap: 2px;
}
.tray .net {
    margin-left: 10px;
}
.tray time {
    margin-left: 7px;
}
```
